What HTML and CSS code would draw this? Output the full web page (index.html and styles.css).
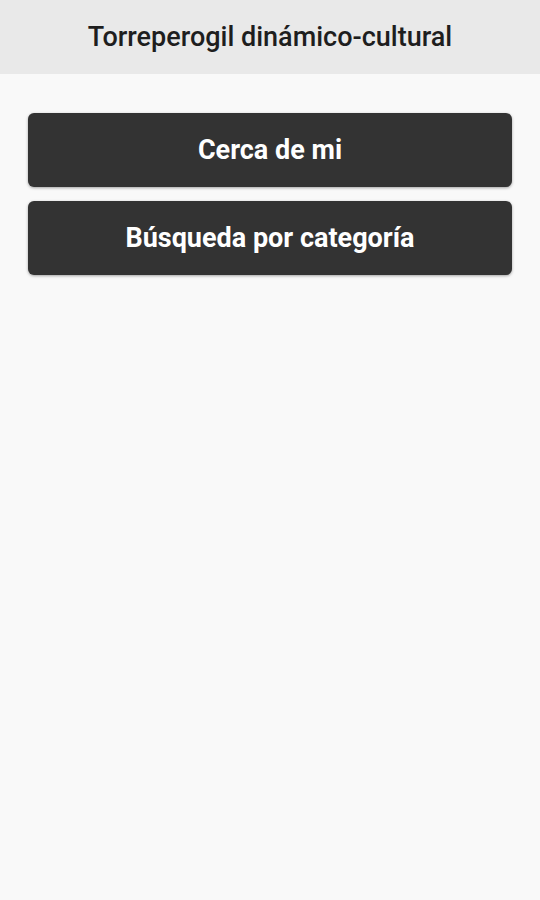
FILE: index.html
```html
<!DOCTYPE html>
<html lang="es">
<head>
<meta charset="utf-8">
<link rel="stylesheet" href="styles.css">
</head>
<body>
<header class="bar">Torreperogil dinámico-cultural</header>
<main class="content">
  <button class="btn">Cerca de mi</button>
  <button class="btn">Búsqueda por categoría</button>
</main>
</body>
</html>
```
FILE: styles.css
```css
html, body { margin: 0; padding: 0; }
body {
  background: #f9f9f9;
  font-family: Roboto, "Noto Sans", sans-serif;
  width: 540px;
  min-height: 900px;
}
.bar {
  height: 74px;
  background: #e9e9e9;
  display: flex;
  align-items: center;
  justify-content: center;
  font-size: 27px;
  font-weight: 500;
  color: #1e1e1e;
  box-sizing: border-box;
  padding-bottom: 1px;
}
.content {
  display: flex;
  flex-direction: column;
  gap: 14px;
  padding: 39px 28px 0 28px;
}
.btn {
  height: 74px;
  border: none;
  border-radius: 6px;
  background: #333333;
  color: #ffffff;
  font-family: Roboto, "Noto Sans", sans-serif;
  font-size: 27px;
  font-weight: 700;
  box-shadow: 0 1px 3px rgba(0,0,0,0.35);
  padding: 0;
}
```
